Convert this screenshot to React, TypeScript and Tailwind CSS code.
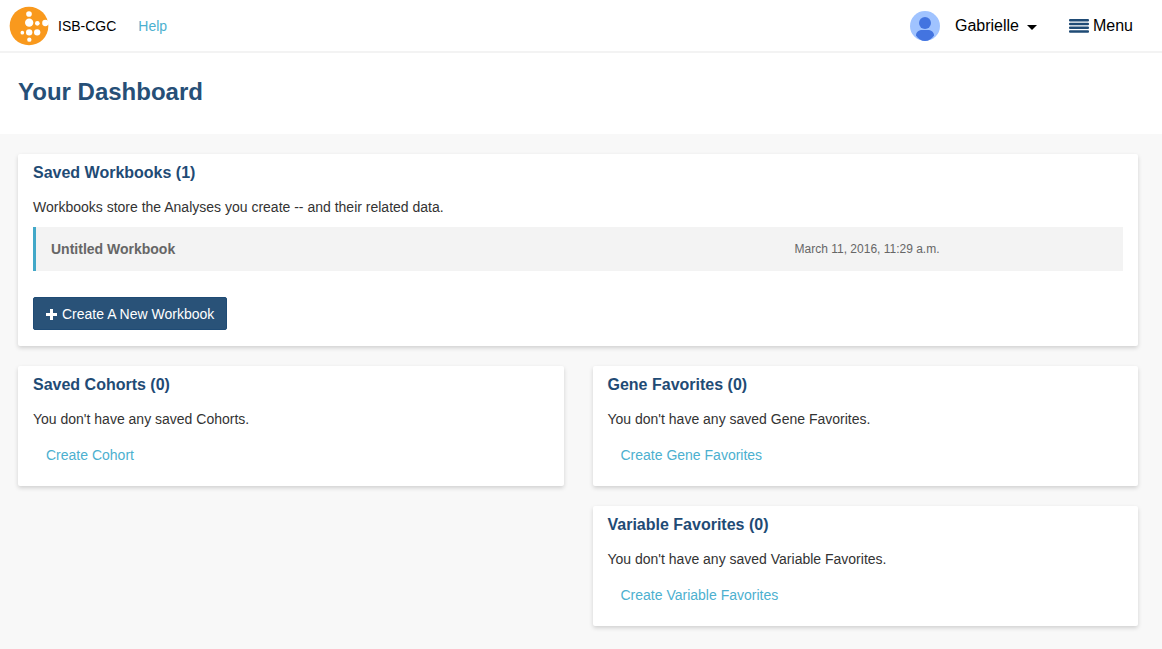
import type { ReactNode } from "react";

function Logo() {
  return (
    <svg viewBox="27 16 120 120" className="size-10" aria-hidden="true">
      <circle cx="87" cy="76" r="58" fill="#f9991d" />
      <g fill="#fff">
        <circle cx="87" cy="40" r="8.5" />
        <circle cx="87.500" cy="66" r="12.500" />
        <circle cx="112" cy="68" r="7" />
        <circle cx="136" cy="67" r="9.500" />
        <circle cx="67" cy="96" r="5.500" />
        <circle cx="87.500" cy="95" r="9.500" />
        <circle cx="111.500" cy="95" r="9.500" />
        <circle cx="88" cy="117" r="6.500" />
      </g>
    </svg>
  );
}

function Avatar() {
  return (
    <svg viewBox="0 0 30 30" className="size-[30px]" aria-hidden="true">
      <circle cx="15" cy="15" r="15" fill="#a0c3ff" />
      <circle cx="15" cy="12" r="6" fill="#4374e0" />
      <path
        d="M6 24.500C6 20.500 9.500 19 12 19h6c2.500 0 6 1.500 6 5.500C22 28 18.500 30 15 30s-7-2-9-5.500Z"
        fill="#4374e0"
      />
    </svg>
  );
}

function Card({ title, text, children }: { title: string; text: string; children: ReactNode }) {
  return (
    <section className="rounded-xs bg-white px-[15px] pt-2 pb-4 shadow-[0_2px_4px_rgba(0,0,0,0.16)]">
      <h2 className="text-base leading-[22px] font-bold text-[#1f4b75]">{title}</h2>
      <p className="mt-3 text-sm leading-[22px] text-[#333]">{text}</p>
      {children}
    </section>
  );
}

function CreateLink({ children }: { children: ReactNode }) {
  return (
    <a href="#create" className="mt-2 inline-block px-[13px] pt-[7px] pb-[5px] text-sm leading-5 text-[#4cb0cf]">
      {children}
    </a>
  );
}

export default function App() {
  return (
    <div className="min-h-screen bg-[#f8f8f8] font-['Liberation_Sans',Arial,sans-serif]">
      <header className="flex h-[53px] items-center border-b-2 border-[#f3f3f3] bg-white pr-[29px] pl-[9px]">
        <a href="#home" className="flex items-center gap-[9px] text-sm text-black">
          <Logo />
          ISB-CGC
        </a>
        <a href="#help" className="ml-[22px] text-sm text-[#4cb0cf]">
          Help
        </a>
        <button type="button" className="ml-auto flex items-center text-base text-black">
          <Avatar />
          <span className="ml-[15px]">Gabrielle</span>
          <svg viewBox="0 0 10 5" className="mt-[3px] ml-2 h-[5px] w-2.5" aria-hidden="true">
            <path d="M0 0h10L5 5Z" />
          </svg>
        </button>
        <button type="button" className="ml-8 flex items-center gap-1 text-base text-black">
          <svg viewBox="0 0 20 14" className="h-3.5 w-5" aria-hidden="true">
            <g fill="#1f4b75">
              <rect width="20" height="2.500" rx="1" />
              <rect y="3.700" width="20" height="2.500" rx="1" />
              <rect y="7.500" width="20" height="2.500" rx="1" />
              <rect y="11.300" width="20" height="2.500" rx="1" />
            </g>
          </svg>
          Menu
        </button>
      </header>

      <div className="bg-white px-[18px] pt-[23px] pb-[26px]">
        <h1 className="text-2xl leading-8 font-bold text-[#264f77]">Your Dashboard</h1>
      </div>

      <main className="flex flex-col gap-5 py-5 pr-6 pl-[18px]">
        <Card title="Saved Workbooks (1)" text="Workbooks store the Analyses you create -- and their related data.">
          <table className="mt-[9px] w-full table-fixed bg-[#f3f3f3]">
            <tbody>
              <tr className="h-11">
                <td className="w-[69%] border-l-3 border-[#42a8c8] pl-[15px] text-sm font-bold">
                  <a href="#workbook" className="text-[#666]">
                    Untitled Workbook
                  </a>
                </td>
                <td className="pl-[9px] text-xs text-[#666]">March 11, 2016, 11:29 a.m.</td>
              </tr>
            </tbody>
          </table>
          <button
            type="button"
            className="mt-[26px] flex items-center gap-[5px] rounded-xs border border-[#1f4b75] bg-[#295278] px-3 pt-1.5 pb-[5px] text-sm leading-5 text-white"
          >
            <svg viewBox="0 0 11 11" className="size-[11px]" fill="#fff" aria-hidden="true">
              <path d="M4 0h3v4h4v3H7v4H4V7H0V4h4Z" />
            </svg>
            Create A New Workbook
          </button>
        </Card>

        <div className="grid grid-cols-2 items-start gap-[29px]">
          <Card title="Saved Cohorts (0)" text="You don't have any saved Cohorts.">
            <CreateLink>Create Cohort</CreateLink>
          </Card>
          <div className="flex flex-col gap-5">
            <Card title="Gene Favorites (0)" text="You don't have any saved Gene Favorites.">
              <CreateLink>Create Gene Favorites</CreateLink>
            </Card>
            <Card title="Variable Favorites (0)" text="You don't have any saved Variable Favorites.">
              <CreateLink>Create Variable Favorites</CreateLink>
            </Card>
          </div>
        </div>
      </main>
    </div>
  );
}
